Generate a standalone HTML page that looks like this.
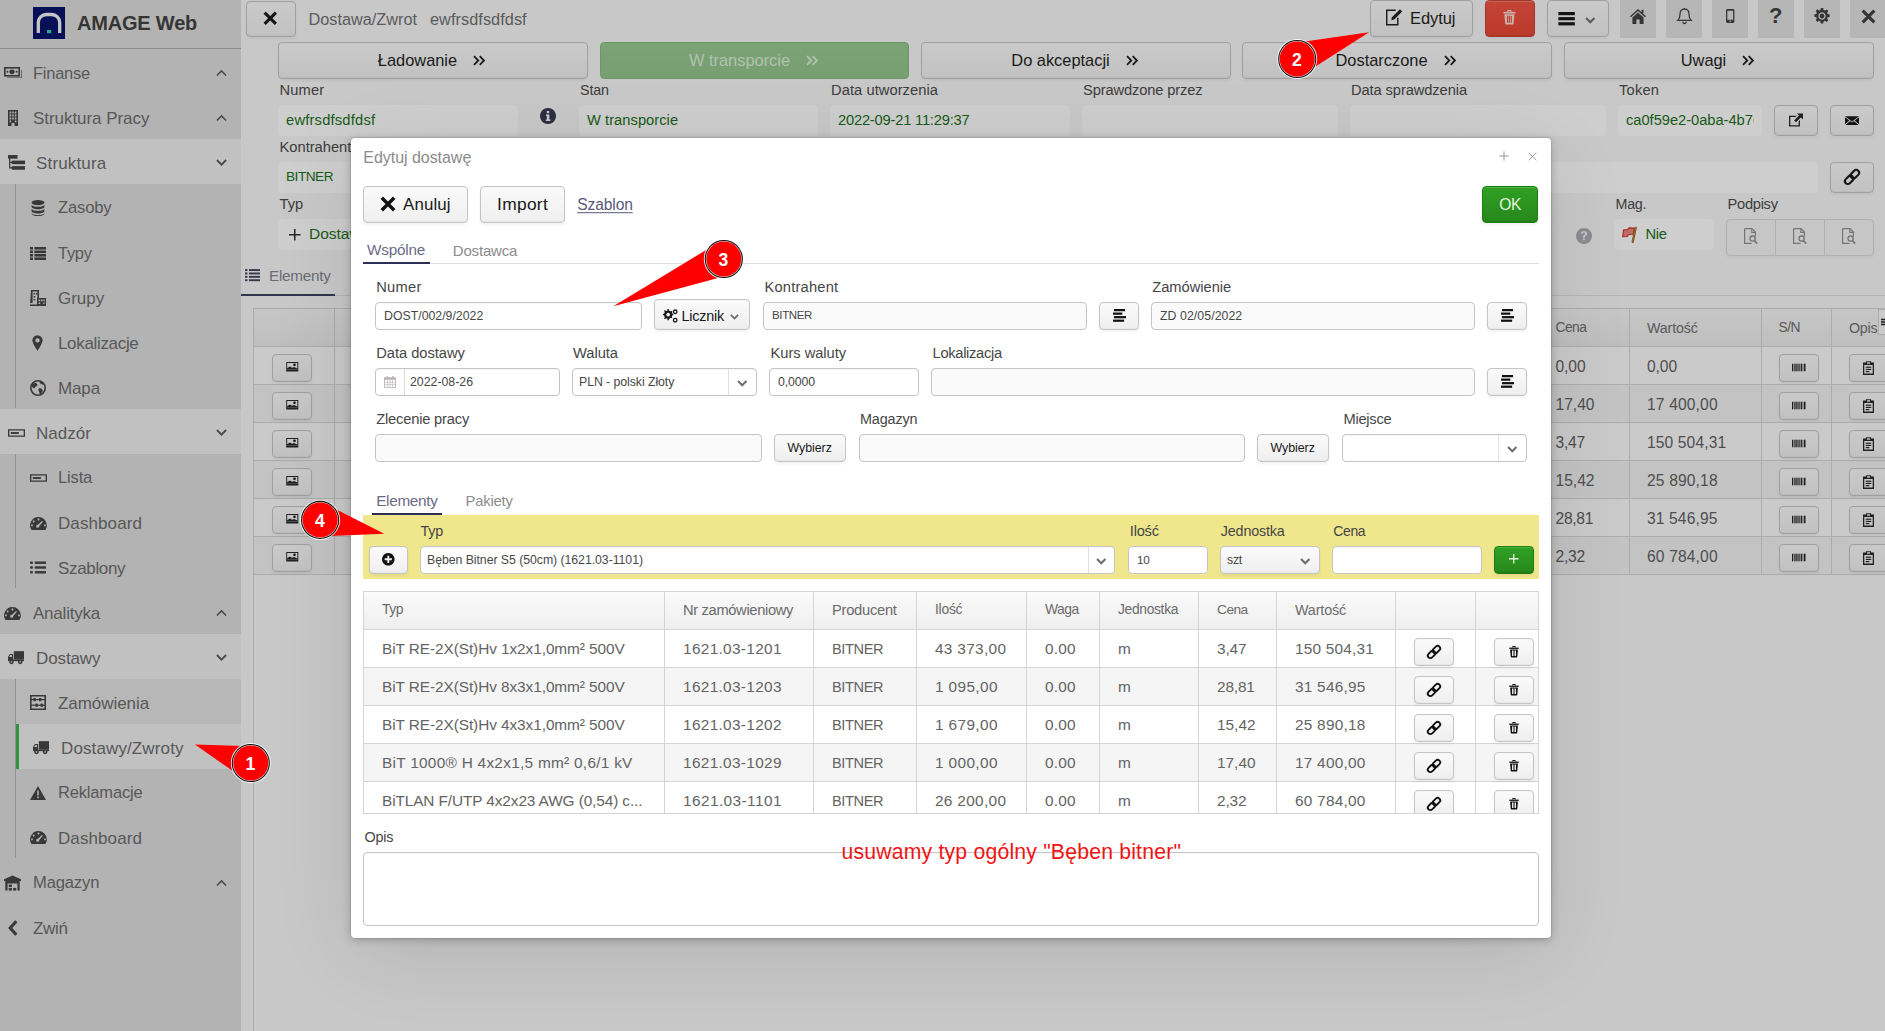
<!DOCTYPE html>
<html lang="pl"><head><meta charset="utf-8"><title>AMAGE Web</title>
<style>
*{box-sizing:border-box;margin:0;padding:0}
html,body{width:1885px;height:1031px;overflow:hidden;background:#fff}
body{font-family:"Liberation Sans",sans-serif;color:#464646;position:relative}
#app{position:absolute;left:0;top:0;width:1885px;height:1031px;background:#fff;overflow:hidden}
#app div,#app span,#app svg,#modal div,#modal span,#modal svg,#modal a,.co{position:absolute}
#curtain{position:absolute;left:0;top:0;width:1885px;height:1031px;background:rgba(34,34,34,.22)}
.t{white-space:nowrap;transform:translateY(-50%);line-height:1}
.ic{display:block;overflow:visible}

.hl{background:#efefef}
.btn{border:1px solid #c5c5c5;border-radius:4px;background:linear-gradient(#fafafa 2%,#efefef 98%);box-shadow:inset 0 1px 0 #f7f7f7,inset 0 -1px 0 #e7e7e7,0 2px 3px rgba(0,0,0,.05)}
.ro{background:#fff;border-radius:4px}
.in{background:#fff;border:1px solid #c5c5c5;border-radius:4px;box-shadow:inset 0 1px 0 #f7f7f7,0 1px 0 rgba(255,255,255,.1)}
.dis{background:#fafafa;border:1px solid #c5c5c5;border-radius:4px}
.lbl{font-size:14.6px;color:#464646}
.grn{color:#1c6e1c}
#modal{position:absolute;left:351px;top:138px;width:1200px;height:800px;background:#fff;border-radius:4px;box-shadow:0 2px 10px rgba(0,0,0,.22),0 16px 80px -6px rgba(0,0,0,.12),0 0 0 1px rgba(0,0,0,.09)}

</style></head><body>
<div id="app">
<div style="left:0px;top:0px;width:241px;height:1031px;background:#dddddd"><div style="left:33px;top:7px;width:32px;height:32px;background:#000c66;"></div><svg class="ic" style="left:33px;top:7px" width="32" height="32" viewBox="0 0 32 32"><path d="M5.300 26V15.500a8 8 0 0 1 8-8h5.400a8 8 0 0 1 8 8V26" fill="none" stroke="#f4f4f4" stroke-width="3.300"/><rect x="14" y="23" width="4.200" height="3.200" fill="#1fd9a0"/></svg><span class="t" style="left:77px;top:23px;font-size:20px;font-weight:bold;color:#3c3c3c;letter-spacing:-0.19px;">AMAGE Web</span><div style="left:0px;top:48px;width:241px;height:1px;background:#a9a9a9"></div><svg class="ic" style="left:4px;top:67px;color:#3f3f3f" width="18" height="12" viewBox="0 0 18 12" fill="#3f3f3f"><rect x="0.8" y="0.8" width="14.4" height="8" fill="none" stroke="currentColor" stroke-width="1.6"/><ellipse cx="8" cy="4.8" rx="2.6" ry="2.4"/><path d="M3 10.4h14.4V3h.6v8H3z"/><path d="M3 4.8a2 2 0 0 0 0-0z"/><circle cx="3.4" cy="4.8" r="1"/><circle cx="12.6" cy="4.8" r="1"/></svg><span class="t" style="left:33px;top:72.5px;font-size:16.44px;color:#686868;letter-spacing:-0.22px;">Finanse</span><svg class="ic" style="left:215.5px;top:68.5px;color:#555" width="11" height="7.5" viewBox="0 0 12 8" fill="none"><path d="M1 7 6 2 11 7" fill="none" stroke="currentColor" stroke-width="1.700"/></svg><svg class="ic" style="left:7px;top:110px;color:#3f3f3f" width="12" height="16" viewBox="0 0 12 16" fill="#3f3f3f"><path d="M1 0h10v16H7.5v-3h-3v3H1z M2.6 1.6v2h1.6v-2z M5.2 1.6v2h1.6v-2z M7.8 1.6v2h1.6v-2z M2.6 4.6v2h1.6v-2z M5.2 4.6v2h1.6v-2z M7.8 4.6v2h1.6v-2z M2.6 7.6v2h1.6v-2z M5.2 7.6v2h1.6v-2z M7.8 7.6v2h1.6v-2z M2.6 10.6v1.6h1.6v-1.6z M7.8 10.6v1.6h1.6v-1.6z" fill-rule="evenodd"/></svg><span class="t" style="left:33px;top:117.5px;font-size:17px;color:#686868;letter-spacing:-0.05px;">Struktura Pracy</span><svg class="ic" style="left:215.5px;top:113.5px;color:#555" width="11" height="7.5" viewBox="0 0 12 8" fill="none"><path d="M1 7 6 2 11 7" fill="none" stroke="currentColor" stroke-width="1.700"/></svg><div class="hl" style="left:0px;top:139px;width:241px;height:45px;"></div><svg class="ic" style="left:8px;top:155px;color:#3f3f3f" width="17" height="15" viewBox="0 0 16 14" fill="#3f3f3f"><rect x="0" y="0" width="9" height="3.4"/><rect x="3.6" y="5.2" width="12.4" height="3.4"/><rect x="3.6" y="10.4" width="12.4" height="3.4"/><path d="M1 3v9.6h3v-1.2H2.2V7.4H4V6.2H2.2V3z"/></svg><span class="t" style="left:36px;top:162.5px;font-size:17px;color:#686868;letter-spacing:0.16px;">Struktura</span><svg class="ic" style="left:215.5px;top:158.5px;color:#555" width="11" height="7.5" viewBox="0 0 12 8" fill="none"><path d="M1 1 6 6 11 1" fill="none" stroke="currentColor" stroke-width="2"/></svg><svg class="ic" style="left:31px;top:200px;color:#3f3f3f" width="14" height="16" viewBox="0 0 14 16" fill="#3f3f3f"><ellipse cx="7" cy="2.6" rx="6.4" ry="2.6"/><path d="M.6 4.4c0 1.4 2.9 2.4 6.4 2.4s6.4-1 6.4-2.4v2.4c0 1.4-2.9 2.5-6.4 2.5S.6 8.2.6 6.8z"/><path d="M.6 8.6c0 1.4 2.9 2.4 6.4 2.4s6.4-1 6.4-2.4V11c0 1.4-2.9 2.5-6.4 2.5S.6 12.400.6 11z"/><path d="M.6 12.800c0 1.400 2.900 2.400 6.400 2.400s6.400-1 6.400-2.400v.6c0 1.400-2.900 2.600-6.400 2.600S.6 14.800.6 13.400z"/></svg><span class="t" style="left:58px;top:207.5px;font-size:16.62px;color:#686868;letter-spacing:-0.16px;">Zasoby</span><svg class="ic" style="left:30px;top:247px;color:#3f3f3f" width="16" height="13" viewBox="0 0 16 13" fill="#3f3f3f"><rect x="0" y="0" width="3" height="2.6"/><rect x="4.400" y="0" width="11.600" height="2.6"/><rect x="0" y="3.500" width="3" height="2.600"/><rect x="4.400" y="3.500" width="11.600" height="2.600"/><rect x="0" y="7" width="3" height="2.600"/><rect x="4.400" y="7" width="11.600" height="2.600"/><rect x="0" y="10.400" width="3" height="2.600"/><rect x="4.400" y="10.400" width="11.600" height="2.600"/></svg><span class="t" style="left:58px;top:252.5px;font-size:16.45px;color:#686868;letter-spacing:-0.25px;">Typy</span><svg class="ic" style="left:30px;top:290px;color:#3f3f3f" width="16" height="16" viewBox="0 0 16 16" fill="#3f3f3f"><path d="M1 0h8v9h-1.600V1.600H2.600V13H0v1.400h7V16H0z M3.600 3h1.600v1.600H3.600z M6 3h1.600v1.600H6z M3.600 6h1.600v1.600H3.600z M3.600 9h1.600v1.600H3.600z" fill-rule="evenodd"/><path d="M7 8h9v8H7z M8.600 9.600v1.600h1.600V9.600z M11 9.600v1.600h1.600V9.600z M13.300 9.600v1.600h1.400V9.600z M8.600 12.400V14h1.600v-1.600z M13.300 12.400V14h1.400v-1.600z" fill-rule="evenodd"/></svg><span class="t" style="left:58px;top:297.5px;font-size:17px;color:#686868;letter-spacing:-0.02px;">Grupy</span><svg class="ic" style="left:32px;top:335px;color:#3f3f3f" width="11" height="16" viewBox="0 0 12 17" fill="#3f3f3f"><path d="M6 0a5.600 5.600 0 0 1 5.600 5.600C11.600 9 6 17 6 17S.4 9 .4 5.600A5.600 5.600 0 0 1 6 0z M6 3.200a2.400 2.400 0 1 0 0 4.800a2.400 2.400 0 0 0 0-4.800z" fill-rule="evenodd"/></svg><span class="t" style="left:58px;top:342.5px;font-size:17px;color:#686868;letter-spacing:-0.33px;">Lokalizacje</span><svg class="ic" style="left:30px;top:380px;color:#3f3f3f" width="16" height="16" viewBox="0 0 16 16" fill="#3f3f3f"><circle cx="8" cy="8" r="7.200" fill="none" stroke="currentColor" stroke-width="1.600"/><path d="M3 3.500c1.500-.5 3-.8 4 .2s.2 2.300-1 2.800-1 2-2.200 1.700S1.500 6 1.500 6z M9 8.500c1.500-.5 3 .3 3.500 1.500s-.5 3-1.700 4-1.300-1.200-1.800-2.500-1-2.500 0-3z M9.500 1.200c1.500 0 3.500 1.500 4 2.800-.8.800-2 .5-2.800-.3s-1.500-1.500-1.200-2.500z"/></svg><span class="t" style="left:58px;top:387.5px;font-size:17px;color:#686868;letter-spacing:-0.14px;">Mapa</span><div class="hl" style="left:0px;top:409px;width:241px;height:45px;"></div><svg class="ic" style="left:8px;top:429px;color:#3f3f3f" width="17" height="8" viewBox="0 0 18 8" fill="#3f3f3f"><path d="M0 0h18v8H0z M1.400 1.400v5.200h15.200V1.400z" fill-rule="evenodd"/><rect x="3" y="3" width="8.500" height="2"/></svg><span class="t" style="left:36px;top:432.5px;font-size:17px;color:#686868;letter-spacing:0.04px;">Nadzór</span><svg class="ic" style="left:215.5px;top:428.5px;color:#555" width="11" height="7.5" viewBox="0 0 12 8" fill="none"><path d="M1 1 6 6 11 1" fill="none" stroke="currentColor" stroke-width="2"/></svg><svg class="ic" style="left:30px;top:474px;color:#3f3f3f" width="17" height="8" viewBox="0 0 18 8" fill="#3f3f3f"><path d="M0 0h18v8H0z M1.400 1.400v5.200h15.200V1.400z" fill-rule="evenodd"/><rect x="3" y="3" width="8.500" height="2"/></svg><span class="t" style="left:58px;top:477.5px;font-size:16.54px;color:#686868;letter-spacing:-0.16px;">Lista</span><svg class="ic" style="left:30px;top:517px;color:#3f3f3f" width="17" height="13" viewBox="0 0 18 14" fill="#3f3f3f"><path d="M9 0a9 9 0 0 1 9 9c0 1.900-.6 3.600-1.500 5H1.500A9 9 0 0 1 9 0z M12.800 4.200 8.400 8.300a1.700 1.700 0 1 0 1.400 1.300l4-4.400z M3.800 3.800a1 1 0 1 0 .01 0z M9 1.700a1 1 0 1 0 .01 0z M2 8a1 1 0 1 0 .01 0z M16 8a1 1 0 1 0 .01 0z" fill-rule="evenodd"/></svg><span class="t" style="left:58px;top:522.5px;font-size:17px;color:#686868;letter-spacing:0.09px;">Dashboard</span><svg class="ic" style="left:30px;top:561px;color:#3f3f3f" width="16" height="13" viewBox="0 0 16 13" fill="#3f3f3f"><rect x="0" y="0.500" width="3" height="2.400" rx="1"/><rect x="4.800" y="0.500" width="11.200" height="2.400"/><rect x="0" y="5.300" width="3" height="2.400" rx="1"/><rect x="4.800" y="5.300" width="11.200" height="2.400"/><rect x="0" y="10.100" width="3" height="2.400" rx="1"/><rect x="4.800" y="10.100" width="11.200" height="2.400"/></svg><span class="t" style="left:58px;top:567.5px;font-size:17px;color:#686868;letter-spacing:-0.33px;">Szablony</span><svg class="ic" style="left:4px;top:607px;color:#3f3f3f" width="17" height="13" viewBox="0 0 18 14" fill="#3f3f3f"><path d="M9 0a9 9 0 0 1 9 9c0 1.900-.6 3.600-1.500 5H1.500A9 9 0 0 1 9 0z M12.800 4.200 8.400 8.300a1.700 1.700 0 1 0 1.400 1.300l4-4.400z M3.800 3.800a1 1 0 1 0 .01 0z M9 1.700a1 1 0 1 0 .01 0z M2 8a1 1 0 1 0 .01 0z M16 8a1 1 0 1 0 .01 0z" fill-rule="evenodd"/></svg><span class="t" style="left:33px;top:612.5px;font-size:17px;color:#686868;letter-spacing:-0.22px;">Analityka</span><svg class="ic" style="left:215.5px;top:608.5px;color:#555" width="11" height="7.5" viewBox="0 0 12 8" fill="none"><path d="M1 7 6 2 11 7" fill="none" stroke="currentColor" stroke-width="1.700"/></svg><div class="hl" style="left:0px;top:634px;width:241px;height:45px;"></div><svg class="ic" style="left:8px;top:651px;color:#3f3f3f" width="16" height="13.5" viewBox="0 0 17 14" fill="#3f3f3f"><path d="M6.200 0H17v9H6.200z"/><path d="M0 9.800V6.200L2 3h3.400v6.800z M1.300 6.200h2.900V4.200H2.500z" fill-rule="evenodd"/><path d="M0 9h17v1.600H0z"/><circle cx="3.700" cy="11.300" r="2.500"/><circle cx="12.900" cy="11.300" r="2.500"/><circle cx="3.700" cy="11.300" r=".9" fill="#d0d0d0"/><circle cx="12.900" cy="11.300" r=".9" fill="#d0d0d0"/></svg><span class="t" style="left:36px;top:657.5px;font-size:17px;color:#686868;letter-spacing:-0.11px;">Dostawy</span><svg class="ic" style="left:215.5px;top:653.5px;color:#555" width="11" height="7.5" viewBox="0 0 12 8" fill="none"><path d="M1 1 6 6 11 1" fill="none" stroke="currentColor" stroke-width="2"/></svg><div style="left:16px;top:679px;width:225px;height:45px;background:#e2e2e2"></div><svg class="ic" style="left:30px;top:695px;color:#3f3f3f" width="16" height="15" viewBox="0 0 16 15" fill="#3f3f3f"><path d="M0 0h16v15H0z M1.600 1.600v11.800h12.800V1.600z" fill-rule="evenodd"/><rect x="1" y="4" width="14" height="1.200"/><rect x="1" y="9.600" width="14" height="1.200"/><rect x="3.400" y="3" width="2.400" height="3.200"/><rect x="9" y="3" width="2.400" height="3.200"/><rect x="5.400" y="8.600" width="2.400" height="3.200"/><rect x="10.600" y="8.600" width="2.400" height="3.200"/></svg><span class="t" style="left:58px;top:702.5px;font-size:17px;color:#686868;letter-spacing:-0.05px;">Zamówienia</span><div class="hl" style="left:16px;top:724px;width:225px;height:45px;"></div><div style="left:16px;top:724px;width:3px;height:45px;background:#36b34a"></div><svg class="ic" style="left:33px;top:741px;color:#3f3f3f" width="16" height="13.5" viewBox="0 0 17 14" fill="#3f3f3f"><path d="M6.200 0H17v9H6.200z"/><path d="M0 9.800V6.200L2 3h3.400v6.800z M1.300 6.200h2.900V4.200H2.500z" fill-rule="evenodd"/><path d="M0 9h17v1.600H0z"/><circle cx="3.700" cy="11.300" r="2.500"/><circle cx="12.900" cy="11.300" r="2.500"/><circle cx="3.700" cy="11.300" r=".9" fill="#d0d0d0"/><circle cx="12.900" cy="11.300" r=".9" fill="#d0d0d0"/></svg><span class="t" style="left:61px;top:747.5px;font-size:17px;color:#686868;letter-spacing:0.12px;">Dostawy/Zwroty</span><svg class="ic" style="left:30px;top:786px;color:#3f3f3f" width="16" height="14" viewBox="0 0 16 14" fill="#3f3f3f"><path d="M8 0 16 14H0z M7.200 4.600v5h1.600v-5z M7.200 10.600v1.600h1.600v-1.600z" fill-rule="evenodd"/></svg><span class="t" style="left:58px;top:792.5px;font-size:16.53px;color:#686868;letter-spacing:-0.18px;">Reklamacje</span><svg class="ic" style="left:30px;top:831px;color:#3f3f3f" width="17" height="13" viewBox="0 0 18 14" fill="#3f3f3f"><path d="M9 0a9 9 0 0 1 9 9c0 1.900-.6 3.600-1.500 5H1.500A9 9 0 0 1 9 0z M12.800 4.200 8.400 8.300a1.700 1.700 0 1 0 1.400 1.300l4-4.400z M3.800 3.800a1 1 0 1 0 .01 0z M9 1.700a1 1 0 1 0 .01 0z M2 8a1 1 0 1 0 .01 0z M16 8a1 1 0 1 0 .01 0z" fill-rule="evenodd"/></svg><span class="t" style="left:58px;top:837.5px;font-size:17px;color:#686868;letter-spacing:0.09px;">Dashboard</span><svg class="ic" style="left:4px;top:875px;color:#3f3f3f" width="17" height="16" viewBox="0 0 18 16" fill="#3f3f3f"><path d="M9 0 18 4v2H0V4z"/><path d="M1.400 6h15.200v10h-2.400V8.400H3.800V16H1.400z"/><rect x="5" y="9.600" width="3.400" height="2.600"/><rect x="5" y="13.200" width="3.400" height="2.800"/><rect x="9.600" y="13.200" width="3.400" height="2.800"/></svg><span class="t" style="left:33px;top:882.5px;font-size:16.61px;color:#686868;letter-spacing:-0.17px;">Magazyn</span><svg class="ic" style="left:215.5px;top:878.5px;color:#555" width="11" height="7.5" viewBox="0 0 12 8" fill="none"><path d="M1 7 6 2 11 7" fill="none" stroke="currentColor" stroke-width="1.700"/></svg><svg class="ic" style="left:8px;top:920px;color:#3f3f3f" width="10" height="16" viewBox="0 0 10 16" fill="#3f3f3f"><path d="M8.300 1.300 2.200 8l6.100 6.700" fill="none" stroke="currentColor" stroke-width="3.100"/></svg><span class="t" style="left:33px;top:927.5px;font-size:17px;color:#686868;letter-spacing:-0.30px;">Zwiń</span><div style="left:15px;top:184px;width:1px;height:224px;background:#b0b0b0"></div><div style="left:15px;top:454px;width:1px;height:134px;background:#b0b0b0"></div><div style="left:15px;top:679px;width:1px;height:179px;background:#b0b0b0"></div></div><div style="left:241px;top:0px;width:1644px;height:1031px;background:#f8f8f8"></div><div class="btn" style="left:246px;top:1px;width:50px;height:36px;"></div><svg class="ic" style="left:263px;top:10.5px;color:#111;" width="14.5" height="14.5" viewBox="0 0 16 16" fill="#111"><path d="M1.800 1.800 14.200 14.200M14.200 1.800 1.800 14.200" stroke="currentColor" stroke-width="3.400" fill="none" stroke-linecap="butt"/></svg><span class="t" style="left:308.5px;top:19px;font-size:16.3px;color:#6c6c6c;letter-spacing:-0.01px;">Dostawa/Zwrot</span><span class="t" style="left:430px;top:19px;font-size:16.3px;color:#6c6c6c;letter-spacing:0.06px;">ewfrsdfsdfdsf</span><div class="btn" style="left:1370px;top:0px;width:103px;height:37px;"></div><svg class="ic" style="left:1386px;top:8.5px;color:#1c1c1c;" width="16.4" height="16.4" viewBox="0 0 16 16" fill="#1c1c1c"><path d="M9.500 1.200H.700V15.300H11.500V8.500" fill="none" stroke="currentColor" stroke-width="1.400"/><path d="M13.600 .300 15.800 2.500 8 10.300 5.200 10.900 5.800 8.100z"/></svg><span class="t" style="left:1410px;top:17.8px;font-size:16.5px;color:#191919;letter-spacing:-0.07px;">Edytuj</span><div class="btn" style="left:1485px;top:0px;width:50px;height:37px;background:linear-gradient(#f0503f 2%,#e8412f 98%);border-color:#c9402f;box-shadow:inset 0 1px 0 #f47a6c,inset 0 -1px 0 #dc3a2a,0 2px 3px rgba(0,0,0,.05)"></div><svg class="ic" style="left:1503px;top:8.5px;color:#fbdcd6;" width="12.8" height="16.4" viewBox="0 0 14 16" fill="#fbdcd6"><path d="M4.600 2.200V.900a.9.900 0 0 1 .9-.9h3a.9.900 0 0 1 .9.900V2.200h-1.200V1.200H5.800V2.200z"/><path d="M.400 2.200h13.200V4H.400z"/><path d="M1.500 4.800h11l-.9 10.200a1 1 0 0 1-1 1H3.400a1 1 0 0 1-1-1z M4.300 6.400v7.600h1.300V6.400z M6.350 6.400v7.600h1.300V6.400z M8.400 6.400v7.600h1.300V6.400z" fill-rule="evenodd"/></svg><div class="btn" style="left:1547px;top:0px;width:62px;height:37px;"></div><svg class="ic" style="left:1558px;top:11.8px;color:#111;" width="17.2" height="13.4" viewBox="0 0 16 13" fill="#111"><rect width="16" height="3.100" y="0"/><rect width="16" height="3.100" y="4.950"/><rect width="16" height="3.100" y="9.900"/></svg><svg class="ic" style="left:1585px;top:17px;color:#6e6e6e" width="10.5" height="7" viewBox="0 0 12 8" fill="none"><path d="M1.200 1.200 6 6 10.800 1.200" fill="none" stroke="currentColor" stroke-width="2.500"/></svg><div style="left:1620px;top:0px;width:36px;height:38px;background:#e1e1e1"></div><div style="left:1666px;top:0px;width:36px;height:38px;background:#e1e1e1"></div><div style="left:1712px;top:0px;width:36px;height:38px;background:#e1e1e1"></div><div style="left:1758px;top:0px;width:36px;height:38px;background:#e1e1e1"></div><div style="left:1804px;top:0px;width:36px;height:38px;background:#e1e1e1"></div><div style="left:1850px;top:0px;width:36px;height:38px;background:#e1e1e1"></div><svg class="ic" style="left:1630px;top:8.5px;color:#3c3c3c;" width="16" height="15" viewBox="0 0 16 15" fill="#3c3c3c"><path d="M8 0 16 7.200 15 8.300 8 2.100 1 8.300 0 7.200z"/><path d="M8 3.400 13.600 8.400V15H9.600V10.500H6.400V15H2.400V8.400z"/><rect x="11.500" y=".8" width="2" height="3.500"/></svg><svg class="ic" style="left:1677px;top:8px;color:#3c3c3c" width="15" height="17" viewBox="0 0 15 17" fill="#3c3c3c"><path d="M7.500 1.200c3 0 4.500 2.300 4.500 5 0 3.800 1.300 5.300 2.200 6.200H.8C1.700 11.500 3 10 3 6.200c0-2.700 1.500-5 4.500-5z" fill="none" stroke="currentColor" stroke-width="1.300"/><path d="M5.800 13.800a1.700 1.700 0 0 0 3.400 0" fill="none" stroke="currentColor" stroke-width="1.300"/><rect x="6.900" y="0" width="1.200" height="1.500"/></svg><svg class="ic" style="left:1726px;top:9px;color:#3c3c3c;" width="8.4" height="14" viewBox="0 0 9 15" fill="#3c3c3c"><path d="M1.500 0h6A1.500 1.500 0 0 1 9 1.500v12A1.500 1.500 0 0 1 7.500 15h-6A1.500 1.500 0 0 1 0 13.500v-12A1.500 1.500 0 0 1 1.500 0z M1.400 2v9.500h6.200V2z M4.500 12.300a.8.800 0 1 0 .01 0z" fill-rule="evenodd"/></svg><span class="t" style="left:1769px;top:16.2px;font-size:22px;font-weight:bold;color:#3c3c3c;">?</span><svg class="ic" style="left:1814px;top:8px;color:#3c3c3c;" width="16" height="16" viewBox="0 0 16 16" fill="#3c3c3c"><path d="M6.800 0h2.400l.4 2 1.300.55 1.700-1.150 1.700 1.700-1.150 1.700.55 1.300 2 .4v2.400l-2 .4-.55 1.300 1.150 1.700-1.700 1.700-1.700-1.150-1.300.55-.4 2H6.800l-.4-2-1.300-.55-1.700 1.150-1.700-1.700 1.150-1.700L2.300 9.200l-2-.4V6.400l2-.4.55-1.300L1.700 3l1.700-1.700 1.700 1.150L6.400 2z M8 4.300a3.700 3.700 0 1 0 .01 0z M8 5.600a2.400 2.400 0 1 1-.01 0z" fill-rule="evenodd"/></svg><svg class="ic" style="left:1860.5px;top:8.5px;color:#3c3c3c;" width="15" height="15" viewBox="0 0 16 16" fill="#3c3c3c"><path d="M1.800 1.800 14.200 14.200M14.200 1.800 1.800 14.200" stroke="currentColor" stroke-width="3.400" fill="none" stroke-linecap="butt"/></svg><div class="btn" style="left:278px;top:42px;width:309.5px;height:37px;"></div><div style="left:278px;top:42px;width:310px;height:37px;display:flex;align-items:center;justify-content:center;padding-right:3px"><span style="position:static;font-size:16.4px;color:#191919">Ładowanie</span><svg style="position:static;margin-left:16px;color:#191919" width="12" height="11" viewBox="0 0 14 12"><path d="M1.200 1 6.200 6 1.200 11M7.800 1 12.800 6 7.800 11" stroke="currentColor" stroke-width="2.100" fill="none"/></svg></div><div class="btn" style="left:600px;top:42px;width:309px;height:37px;background:linear-gradient(#96c88e,#90c388);border-color:#86b87e;box-shadow:none"></div><div style="left:600px;top:42px;width:310px;height:37px;display:flex;align-items:center;justify-content:center;padding-right:3px"><span style="position:static;font-size:16.4px;color:#dbeed8">W transporcie</span><svg style="position:static;margin-left:16px;color:#dbeed8" width="12" height="11" viewBox="0 0 14 12"><path d="M1.200 1 6.200 6 1.200 11M7.800 1 12.800 6 7.800 11" stroke="currentColor" stroke-width="2.100" fill="none"/></svg></div><div class="btn" style="left:921px;top:42px;width:309.5px;height:37px;"></div><div style="left:921px;top:42px;width:310px;height:37px;display:flex;align-items:center;justify-content:center;padding-right:3px"><span style="position:static;font-size:16.4px;color:#191919">Do akceptacji</span><svg style="position:static;margin-left:16px;color:#191919" width="12" height="11" viewBox="0 0 14 12"><path d="M1.200 1 6.200 6 1.200 11M7.800 1 12.800 6 7.800 11" stroke="currentColor" stroke-width="2.100" fill="none"/></svg></div><div class="btn" style="left:1242px;top:42px;width:309.5px;height:37px;"></div><div style="left:1242px;top:42px;width:310px;height:37px;display:flex;align-items:center;justify-content:center;padding-right:3px"><span style="position:static;font-size:16.4px;color:#191919">Dostarczone</span><svg style="position:static;margin-left:16px;color:#191919" width="12" height="11" viewBox="0 0 14 12"><path d="M1.200 1 6.200 6 1.200 11M7.800 1 12.800 6 7.800 11" stroke="currentColor" stroke-width="2.100" fill="none"/></svg></div><div class="btn" style="left:1564px;top:42px;width:309.5px;height:37px;"></div><div style="left:1564px;top:42px;width:310px;height:37px;display:flex;align-items:center;justify-content:center;padding-right:3px"><span style="position:static;font-size:16.4px;color:#191919">Uwagi</span><svg style="position:static;margin-left:16px;color:#191919" width="12" height="11" viewBox="0 0 14 12"><path d="M1.200 1 6.200 6 1.200 11M7.800 1 12.800 6 7.800 11" stroke="currentColor" stroke-width="2.100" fill="none"/></svg></div><span class="t" style="left:279.5px;top:90px;font-size:14.7px;color:#464646;letter-spacing:0.13px;">Numer</span><span class="t" style="left:580px;top:90px;font-size:14.34px;color:#464646;letter-spacing:-0.16px;">Stan</span><span class="t" style="left:831px;top:90px;font-size:14.7px;color:#464646;letter-spacing:0.06px;">Data utworzenia</span><span class="t" style="left:1083px;top:90px;font-size:14.7px;color:#464646;letter-spacing:-0.14px;">Sprawdzone przez</span><span class="t" style="left:1351px;top:90px;font-size:14.7px;color:#464646;letter-spacing:-0.10px;">Data sprawdzenia</span><span class="t" style="left:1619px;top:90px;font-size:14.7px;color:#464646;letter-spacing:0.20px;">Token</span><div class="ro" style="left:278px;top:105px;width:240px;height:31px;"><div style="left:0px;top:0px;width:232px;height:31px;overflow:hidden"><span class="t" style="left:8px;top:15px;font-size:14.7px;color:#146c14;letter-spacing:0.21px;">ewfrsdfsdfdsf</span></div></div><div class="ro" style="left:579px;top:105px;width:239px;height:31px;"><div style="left:0px;top:0px;width:231px;height:31px;overflow:hidden"><span class="t" style="left:8px;top:15px;font-size:14.7px;color:#146c14;letter-spacing:0.04px;">W transporcie</span></div></div><div class="ro" style="left:830px;top:105px;width:240px;height:31px;"><div style="left:0px;top:0px;width:232px;height:31px;overflow:hidden"><span class="t" style="left:8px;top:15px;font-size:14.7px;color:#146c14;letter-spacing:-0.20px;">2022-09-21 11:29:37</span></div></div><div class="ro" style="left:1082px;top:105px;width:256px;height:31px;"></div><div class="ro" style="left:1350px;top:105px;width:256px;height:31px;"></div><div class="ro" style="left:1618px;top:105px;width:144px;height:31px;"><div style="left:0px;top:0px;width:136px;height:31px;overflow:hidden"><span class="t" style="left:8px;top:15px;font-size:14.7px;color:#146c14;letter-spacing:-0.03px;">ca0f59e2-0aba-4b76</span></div></div><svg class="ic" style="left:540px;top:108px;color:#33334f;" width="16" height="16" viewBox="0 0 16 16" fill="#33334f"><path d="M8 0a8 8 0 1 0 .01 0z M6.800 3h2.400v2.200H6.800z M6 6.500h3.400v5h1V13H5.800v-1.500h1V8H6z" fill-rule="evenodd"/></svg><div class="btn" style="left:1774px;top:105px;width:44px;height:31px;"></div><svg class="ic" style="left:1789px;top:113px;color:#222;" width="14" height="14" viewBox="0 0 16 15" fill="#222"><path d="M0 2.500h9L7.500 4H1.500v9.500H11V9l1.500-1.500V15H0z"/><path d="M9 0h7v7l-2.400-2.400L8 10.200 5.800 8l5.600-5.600z"/></svg><div class="btn" style="left:1830px;top:105px;width:44px;height:31px;"></div><svg class="ic" style="left:1845px;top:116px;color:#111;" width="14" height="9" viewBox="0 0 16 10" fill="#111"><path d="M0 0h16L8 6z"/><path d="M0 1.300 5 5 0 9.400z M16 1.300 11 5 16 9.400z M.6 10 5.900 5.700 8 7.300l2.100-1.600L15.400 10z"/></svg><span class="t" style="left:279.5px;top:147px;font-size:14.7px;color:#464646;">Kontrahent</span><div class="ro" style="left:278px;top:162px;width:1540px;height:31px;"><span class="t" style="left:8px;top:15px;font-size:13.63px;color:#146c14;letter-spacing:-0.49px;">BITNER</span></div><div class="btn" style="left:1830px;top:162px;width:44px;height:31px;"></div><svg class="ic" style="left:1844px;top:169px;color:#111;" width="16" height="16" viewBox="0 0 16 16" fill="#111"><g transform="rotate(-45 8 8)" fill="none" stroke="currentColor" stroke-width="2.100"><rect x="-0.800" y="5.100" width="9.600" height="5.800" rx="2.900"/><rect x="7.200" y="5.100" width="9.600" height="5.800" rx="2.900"/></g></svg><span class="t" style="left:279.5px;top:204px;font-size:14.7px;color:#464646;">Typ</span><div class="ro" style="left:278px;top:219px;width:1250px;height:31px;"></div><svg class="ic" style="left:288.8px;top:229px;color:#2a2a2a;" width="11.5" height="11.5" viewBox="0 0 12 12" fill="#2a2a2a"><path d="M5.200 0h1.600v5.200H12v1.600H6.800V12H5.200V6.800H0V5.200h5.200z"/></svg><span class="t" style="left:309px;top:234px;font-size:14.7px;color:#146c14;font-size:15.5px;">Dostawa</span><svg class="ic" style="left:1575.5px;top:228px;color:#a9a9b4;" width="16" height="16" viewBox="0 0 16 16" fill="#a9a9b4"><path d="M8 0a8 8 0 1 0 .01 0z M5 5.800C5 4 6.300 3 8 3s3 1 3 2.600c0 1.300-.8 1.900-1.500 2.400-.5.400-.7.700-.7 1.500H7c0-1.300.5-1.900 1.100-2.400.6-.4 1-.8 1-1.400 0-.7-.5-1.100-1.200-1.100s-1.200.5-1.200 1.200z M7 10.500h1.800v1.800H7z" fill-rule="evenodd"/></svg><span class="t" style="left:1615.5px;top:204px;font-size:14.25px;color:#464646;letter-spacing:-0.22px;">Mag.</span><span class="t" style="left:1727.5px;top:204px;font-size:14.7px;color:#464646;letter-spacing:-0.29px;">Podpisy</span><div class="ro" style="left:1614px;top:219px;width:100px;height:31px;"></div><svg class="ic" style="left:1621.5px;top:226.5px;color:#464646;" width="16" height="16" viewBox="0 0 16 16" fill="#464646"><path d="M1.600 2.800 5.600 2.600 7 .900 12.300 1.100 11.300 7.300 6.600 7.500 5.300 9.500 .600 9.700z" fill="#e8827a" stroke="#d22a1a" stroke-width="1.100" stroke-linejoin="round"/><path d="M13.700 .800 10.700 14.800" fill="none" stroke="#8a5a18" stroke-width="2.300" stroke-linecap="round"/><path d="M13.700 .800 10.700 14.800" fill="none" stroke="#c08a3a" stroke-width="1" stroke-linecap="round"/></svg><span class="t" style="left:1645.5px;top:234px;font-size:13.98px;color:#146c14;font-size:14.74px;letter-spacing:-0.36px;">Nie</span><div class="btn" style="left:1726px;top:219px;width:148px;height:37px;background:#f5f5f5;border-color:#d9d9d9;box-shadow:0 2px 3px rgba(0,0,0,.04)"></div><div style="left:1775px;top:220px;width:1px;height:35px;background:#d9d9d9"></div><div style="left:1824px;top:220px;width:1px;height:35px;background:#d9d9d9"></div><svg class="ic" style="left:1744px;top:228px;color:#8d8d8d" width="14" height="16" viewBox="0 0 14 16" fill="none"><path d="M.6.600H8l3.400 3.400v4.500M.6.600v14.800h7" fill="none" stroke="currentColor" stroke-width="1.200"/><path d="M7.800.800v3.600h3.600" fill="none" stroke="currentColor" stroke-width="1.100"/><circle cx="8.600" cy="10.600" r="2.600" fill="none" stroke="currentColor" stroke-width="1.300"/><path d="M10.400 12.600 13.200 15.600" stroke="currentColor" stroke-width="1.700"/></svg><svg class="ic" style="left:1793px;top:228px;color:#8d8d8d" width="14" height="16" viewBox="0 0 14 16" fill="none"><path d="M.6.600H8l3.400 3.400v4.500M.6.600v14.800h7" fill="none" stroke="currentColor" stroke-width="1.200"/><path d="M7.800.800v3.600h3.600" fill="none" stroke="currentColor" stroke-width="1.100"/><circle cx="8.600" cy="10.600" r="2.600" fill="none" stroke="currentColor" stroke-width="1.300"/><path d="M10.400 12.600 13.200 15.600" stroke="currentColor" stroke-width="1.700"/></svg><svg class="ic" style="left:1842px;top:228px;color:#8d8d8d" width="14" height="16" viewBox="0 0 14 16" fill="none"><path d="M.6.600H8l3.400 3.400v4.500M.6.600v14.800h7" fill="none" stroke="currentColor" stroke-width="1.200"/><path d="M7.800.800v3.600h3.600" fill="none" stroke="currentColor" stroke-width="1.100"/><circle cx="8.600" cy="10.600" r="2.600" fill="none" stroke="currentColor" stroke-width="1.300"/><path d="M10.400 12.600 13.200 15.600" stroke="currentColor" stroke-width="1.700"/></svg><div style="left:241px;top:295px;width:1644px;height:1px;background:#dedede"></div><svg class="ic" style="left:245px;top:268.5px;color:#3a3a58;" width="15" height="12.5" viewBox="0 0 16 13" fill="#3a3a58"><rect x="0" y="0" width="2.600" height="2"/><rect x="4.200" y="0" width="11.800" height="2"/><rect x="0" y="3.600" width="2.600" height="2"/><rect x="4.200" y="3.600" width="11.800" height="2"/><rect x="0" y="7.200" width="2.600" height="2"/><rect x="4.200" y="7.200" width="11.800" height="2"/><rect x="0" y="10.800" width="2.600" height="2"/><rect x="4.200" y="10.800" width="11.800" height="2"/></svg><span class="t" style="left:269px;top:276px;font-size:15.3px;color:#82828c;letter-spacing:-0.25px;">Elementy</span><div style="left:241px;top:294px;width:94px;height:2px;background:#3a3a5e"></div><div style="left:253px;top:308px;width:1640px;height:723px;border-left:1px solid #d4d4d4;border-top:1px solid #d4d4d4;background:#f8f8f8;overflow:hidden"><div style="left:0px;top:0px;width:1640px;height:38px;background:linear-gradient(#f6f6f6,#ebebeb);border-bottom:1px solid #d4d4d4"></div><div style="left:0px;top:38px;width:1640px;height:38px;background:#fafafa;border-bottom:1px solid #d4d4d4"></div><div style="left:0px;top:76px;width:1640px;height:38px;background:#f1f1f1;border-bottom:1px solid #d4d4d4"></div><div style="left:0px;top:114px;width:1640px;height:38px;background:#fafafa;border-bottom:1px solid #d4d4d4"></div><div style="left:0px;top:152px;width:1640px;height:38px;background:#f1f1f1;border-bottom:1px solid #d4d4d4"></div><div style="left:0px;top:190px;width:1640px;height:38px;background:#fafafa;border-bottom:1px solid #d4d4d4"></div><div style="left:0px;top:228px;width:1640px;height:38px;background:#f1f1f1;border-bottom:1px solid #d4d4d4"></div><div style="left:80px;top:0px;width:1px;height:266px;background:#d4d4d4"></div><div style="left:1374.5px;top:0px;width:1px;height:266px;background:#d4d4d4"></div><div style="left:1506.5px;top:0px;width:1px;height:266px;background:#d4d4d4"></div><div style="left:1576.5px;top:0px;width:1px;height:266px;background:#d4d4d4"></div><span class="t" style="left:1301.5px;top:18.5px;font-size:13.74px;color:#6b6b6b;letter-spacing:-0.48px;">Cena</span><span class="t" style="left:1393px;top:18.5px;font-size:14.29px;color:#6b6b6b;letter-spacing:-0.16px;">Wartość</span><span class="t" style="left:1524.5px;top:18.5px;font-size:13.79px;color:#6b6b6b;letter-spacing:-0.48px;">S/N</span><span class="t" style="left:1595px;top:18.5px;font-size:14.20px;color:#6b6b6b;letter-spacing:-0.22px;">Opis</span><span class="t" style="left:1301.5px;top:57.5px;font-size:15.6px;color:#5c5c5c;letter-spacing:-0.09px;">0,00</span><span class="t" style="left:1393px;top:57.5px;font-size:15.6px;color:#5c5c5c;letter-spacing:-0.09px;">0,00</span><div class="btn" style="left:18px;top:45px;width:40px;height:28px;"></div><svg class="ic" style="left:31.69999999999999px;top:52.9px;color:#222;" width="12.5" height="9.5" viewBox="0 0 14 11" fill="#222"><path d="M0 0h14v11H0z M1.100 1.100v7.600h11.800V1.100z" fill-rule="evenodd"/><path d="M1 8.800V7.200l3.200-1.900 2.600 1.500 2.200-1 3.900 1.600V8.800z"/><circle cx="9.600" cy="3.300" r="1.600"/></svg><div class="btn" style="left:1525px;top:45px;width:40px;height:28px;"></div><svg class="ic" style="left:1538px;top:53.5px;color:#222;" width="13.5" height="9" viewBox="0 0 16 9" fill="#222"><rect x="0" width="1.600" height="9"/><rect x="2.400" width=".8" height="9"/><rect x="4" width="1.600" height="9"/><rect x="6.400" width="1.400" height="9"/><rect x="8.600" width=".8" height="9"/><rect x="10.200" width="1.600" height="9"/><rect x="12.600" width=".8" height="9"/><rect x="14.200" width="1.800" height="9"/></svg><div class="btn" style="left:1595px;top:45px;width:40px;height:28px;"></div><svg class="ic" style="left:1609px;top:51.5px;color:#222;" width="11" height="14" viewBox="0 0 12 15" fill="#222"><path d="M0 1.500h3.200V0h5.600v1.500H12V15H0z M1.400 4.200v9.400h9.200V4.200z M4.400 1.200v1.600h3.200V1.200z" fill-rule="evenodd"/><rect x="3" y="6" width="6" height="1.300"/><rect x="3" y="8.400" width="6" height="1.300"/><rect x="3" y="10.800" width="4" height="1.300"/></svg><span class="t" style="left:1301.5px;top:95.5px;font-size:15.6px;color:#5c5c5c;letter-spacing:-0.01px;">17,40</span><span class="t" style="left:1393px;top:95.5px;font-size:15.6px;color:#5c5c5c;letter-spacing:0.15px;">17 400,00</span><div class="btn" style="left:18px;top:83px;width:40px;height:28px;"></div><svg class="ic" style="left:31.69999999999999px;top:90.9px;color:#222;" width="12.5" height="9.5" viewBox="0 0 14 11" fill="#222"><path d="M0 0h14v11H0z M1.100 1.100v7.600h11.800V1.100z" fill-rule="evenodd"/><path d="M1 8.800V7.200l3.200-1.900 2.600 1.500 2.200-1 3.900 1.600V8.800z"/><circle cx="9.600" cy="3.300" r="1.600"/></svg><div class="btn" style="left:1525px;top:83px;width:40px;height:28px;"></div><svg class="ic" style="left:1538px;top:91.5px;color:#222;" width="13.5" height="9" viewBox="0 0 16 9" fill="#222"><rect x="0" width="1.600" height="9"/><rect x="2.400" width=".8" height="9"/><rect x="4" width="1.600" height="9"/><rect x="6.400" width="1.400" height="9"/><rect x="8.600" width=".8" height="9"/><rect x="10.200" width="1.600" height="9"/><rect x="12.600" width=".8" height="9"/><rect x="14.200" width="1.800" height="9"/></svg><div class="btn" style="left:1595px;top:83px;width:40px;height:28px;"></div><svg class="ic" style="left:1609px;top:89.5px;color:#222;" width="11" height="14" viewBox="0 0 12 15" fill="#222"><path d="M0 1.500h3.200V0h5.600v1.500H12V15H0z M1.400 4.200v9.400h9.200V4.200z M4.400 1.200v1.600h3.200V1.200z" fill-rule="evenodd"/><rect x="3" y="6" width="6" height="1.300"/><rect x="3" y="8.400" width="6" height="1.300"/><rect x="3" y="10.800" width="4" height="1.300"/></svg><span class="t" style="left:1301.5px;top:133.5px;font-size:15.6px;color:#5c5c5c;letter-spacing:-0.25px;">3,47</span><span class="t" style="left:1393px;top:133.5px;font-size:15.6px;color:#5c5c5c;letter-spacing:0.12px;">150 504,31</span><div class="btn" style="left:18px;top:121px;width:40px;height:28px;"></div><svg class="ic" style="left:31.69999999999999px;top:128.9px;color:#222;" width="12.5" height="9.5" viewBox="0 0 14 11" fill="#222"><path d="M0 0h14v11H0z M1.100 1.100v7.600h11.800V1.100z" fill-rule="evenodd"/><path d="M1 8.800V7.200l3.200-1.900 2.600 1.500 2.200-1 3.900 1.600V8.800z"/><circle cx="9.600" cy="3.300" r="1.600"/></svg><div class="btn" style="left:1525px;top:121px;width:40px;height:28px;"></div><svg class="ic" style="left:1538px;top:129.5px;color:#222;" width="13.5" height="9" viewBox="0 0 16 9" fill="#222"><rect x="0" width="1.600" height="9"/><rect x="2.400" width=".8" height="9"/><rect x="4" width="1.600" height="9"/><rect x="6.400" width="1.400" height="9"/><rect x="8.600" width=".8" height="9"/><rect x="10.200" width="1.600" height="9"/><rect x="12.600" width=".8" height="9"/><rect x="14.200" width="1.800" height="9"/></svg><div class="btn" style="left:1595px;top:121px;width:40px;height:28px;"></div><svg class="ic" style="left:1609px;top:127.5px;color:#222;" width="11" height="14" viewBox="0 0 12 15" fill="#222"><path d="M0 1.500h3.200V0h5.600v1.500H12V15H0z M1.400 4.200v9.400h9.200V4.200z M4.400 1.200v1.600h3.200V1.200z" fill-rule="evenodd"/><rect x="3" y="6" width="6" height="1.300"/><rect x="3" y="8.400" width="6" height="1.300"/><rect x="3" y="10.800" width="4" height="1.300"/></svg><span class="t" style="left:1301.5px;top:171.5px;font-size:15.6px;color:#5c5c5c;letter-spacing:-0.01px;">15,42</span><span class="t" style="left:1393px;top:171.5px;font-size:15.6px;color:#5c5c5c;letter-spacing:0.15px;">25 890,18</span><div class="btn" style="left:18px;top:159px;width:40px;height:28px;"></div><svg class="ic" style="left:31.69999999999999px;top:166.9px;color:#222;" width="12.5" height="9.5" viewBox="0 0 14 11" fill="#222"><path d="M0 0h14v11H0z M1.100 1.100v7.600h11.800V1.100z" fill-rule="evenodd"/><path d="M1 8.800V7.200l3.200-1.900 2.600 1.500 2.200-1 3.900 1.600V8.800z"/><circle cx="9.600" cy="3.300" r="1.600"/></svg><div class="btn" style="left:1525px;top:159px;width:40px;height:28px;"></div><svg class="ic" style="left:1538px;top:167.5px;color:#222;" width="13.5" height="9" viewBox="0 0 16 9" fill="#222"><rect x="0" width="1.600" height="9"/><rect x="2.400" width=".8" height="9"/><rect x="4" width="1.600" height="9"/><rect x="6.400" width="1.400" height="9"/><rect x="8.600" width=".8" height="9"/><rect x="10.200" width="1.600" height="9"/><rect x="12.600" width=".8" height="9"/><rect x="14.200" width="1.800" height="9"/></svg><div class="btn" style="left:1595px;top:159px;width:40px;height:28px;"></div><svg class="ic" style="left:1609px;top:165.5px;color:#222;" width="11" height="14" viewBox="0 0 12 15" fill="#222"><path d="M0 1.500h3.200V0h5.600v1.500H12V15H0z M1.400 4.200v9.400h9.200V4.200z M4.400 1.200v1.600h3.200V1.200z" fill-rule="evenodd"/><rect x="3" y="6" width="6" height="1.300"/><rect x="3" y="8.400" width="6" height="1.300"/><rect x="3" y="10.800" width="4" height="1.300"/></svg><span class="t" style="left:1301.5px;top:209.5px;font-size:15.6px;color:#5c5c5c;letter-spacing:-0.28px;">28,81</span><span class="t" style="left:1393px;top:209.5px;font-size:15.6px;color:#5c5c5c;letter-spacing:0.13px;">31 546,95</span><div class="btn" style="left:18px;top:197px;width:40px;height:28px;"></div><svg class="ic" style="left:31.69999999999999px;top:204.9px;color:#222;" width="12.5" height="9.5" viewBox="0 0 14 11" fill="#222"><path d="M0 0h14v11H0z M1.100 1.100v7.600h11.800V1.100z" fill-rule="evenodd"/><path d="M1 8.800V7.200l3.200-1.900 2.600 1.500 2.200-1 3.900 1.600V8.800z"/><circle cx="9.600" cy="3.300" r="1.600"/></svg><div class="btn" style="left:1525px;top:197px;width:40px;height:28px;"></div><svg class="ic" style="left:1538px;top:205.5px;color:#222;" width="13.5" height="9" viewBox="0 0 16 9" fill="#222"><rect x="0" width="1.600" height="9"/><rect x="2.400" width=".8" height="9"/><rect x="4" width="1.600" height="9"/><rect x="6.400" width="1.400" height="9"/><rect x="8.600" width=".8" height="9"/><rect x="10.200" width="1.600" height="9"/><rect x="12.600" width=".8" height="9"/><rect x="14.200" width="1.800" height="9"/></svg><div class="btn" style="left:1595px;top:197px;width:40px;height:28px;"></div><svg class="ic" style="left:1609px;top:203.5px;color:#222;" width="11" height="14" viewBox="0 0 12 15" fill="#222"><path d="M0 1.500h3.200V0h5.600v1.500H12V15H0z M1.400 4.200v9.400h9.200V4.200z M4.400 1.200v1.600h3.200V1.200z" fill-rule="evenodd"/><rect x="3" y="6" width="6" height="1.300"/><rect x="3" y="8.400" width="6" height="1.300"/><rect x="3" y="10.800" width="4" height="1.300"/></svg><span class="t" style="left:1301.5px;top:247.5px;font-size:15.6px;color:#5c5c5c;letter-spacing:-0.25px;">2,32</span><span class="t" style="left:1393px;top:247.5px;font-size:15.6px;color:#5c5c5c;letter-spacing:0.15px;">60 784,00</span><div class="btn" style="left:18px;top:235px;width:40px;height:28px;"></div><svg class="ic" style="left:31.69999999999999px;top:242.9px;color:#222;" width="12.5" height="9.5" viewBox="0 0 14 11" fill="#222"><path d="M0 0h14v11H0z M1.100 1.100v7.600h11.800V1.100z" fill-rule="evenodd"/><path d="M1 8.800V7.200l3.200-1.900 2.600 1.500 2.200-1 3.900 1.600V8.800z"/><circle cx="9.600" cy="3.300" r="1.600"/></svg><div class="btn" style="left:1525px;top:235px;width:40px;height:28px;"></div><svg class="ic" style="left:1538px;top:243.5px;color:#222;" width="13.5" height="9" viewBox="0 0 16 9" fill="#222"><rect x="0" width="1.600" height="9"/><rect x="2.400" width=".8" height="9"/><rect x="4" width="1.600" height="9"/><rect x="6.400" width="1.400" height="9"/><rect x="8.600" width=".8" height="9"/><rect x="10.200" width="1.600" height="9"/><rect x="12.600" width=".8" height="9"/><rect x="14.200" width="1.800" height="9"/></svg><div class="btn" style="left:1595px;top:235px;width:40px;height:28px;"></div><svg class="ic" style="left:1609px;top:241.5px;color:#222;" width="11" height="14" viewBox="0 0 12 15" fill="#222"><path d="M0 1.500h3.200V0h5.600v1.500H12V15H0z M1.400 4.200v9.400h9.200V4.200z M4.400 1.200v1.600h3.200V1.200z" fill-rule="evenodd"/><rect x="3" y="6" width="6" height="1.300"/><rect x="3" y="8.400" width="6" height="1.300"/><rect x="3" y="10.800" width="4" height="1.300"/></svg><div style="left:1623.5px;top:0px;width:10px;height:26px;background:#fafafa;border:1px solid #d4d4d4"></div><svg class="ic" style="left:1627px;top:9px;color:#222;" width="8" height="8" viewBox="0 0 16 13" fill="#222"><rect width="16" height="3.100" y="0"/><rect width="16" height="3.100" y="4.950"/><rect width="16" height="3.100" y="9.900"/></svg></div>
</div>
<div id="curtain"></div>
<div id="modal"><span class="t" style="left:12.300000000000011px;top:19.599999999999994px;font-size:16px;color:#8a8a8a;letter-spacing:-0.04px;">Edytuj dostawę</span><svg class="ic" style="left:1147.5px;top:13.300000000000011px;color:#8c8c8c" width="10" height="10" viewBox="0 0 12 12" fill="none"><path d="M6 0.500V11.500M0.500 6H11.500" stroke="currentColor" stroke-width="1.100" fill="none"/></svg><svg class="ic" style="left:1177px;top:13.5px;color:#8c8c8c" width="9" height="9" viewBox="0 0 12 12" fill="none"><path d="M1 1 11 11M11 1 1 11" stroke="currentColor" stroke-width="1.100" fill="none"/></svg><div class="btn" style="left:12px;top:48px;width:105px;height:37px;"></div><svg class="ic" style="left:28.80000000000001px;top:57.80000000000001px;color:#111;" width="16" height="16" viewBox="0 0 16 16" fill="#111"><path d="M1.800 1.800 14.200 14.200M14.200 1.800 1.800 14.200" stroke="currentColor" stroke-width="3.400" fill="none" stroke-linecap="butt"/></svg><span class="t" style="left:52px;top:67.19999999999999px;font-size:16.9px;color:#191919;letter-spacing:0.11px;">Anuluj</span><div class="btn" style="left:129px;top:48px;width:85px;height:37px;"></div><span class="t" style="left:146px;top:67.19999999999999px;font-size:17.4px;color:#191919;letter-spacing:0.30px;">Import</span><span class="t" style="left:226.20000000000005px;top:67.30000000000001px;font-size:15.6px;color:#5a5a7a;text-decoration:underline;text-decoration-thickness:1px;text-underline-offset:2px;letter-spacing:-0.11px;">Szablon</span><div class="btn" style="left:1131px;top:48px;width:56px;height:37px;background:linear-gradient(#2fa023 2%,#27881c 98%);border-color:#1f7d17;box-shadow:inset 0 1px 0 #4cb53f,inset 0 -1px 0 #227a18,0 2px 3px rgba(0,0,0,.05)"></div><span class="t" style="left:1148.3px;top:67.19999999999999px;font-size:15.62px;color:#e4f6df;letter-spacing:-0.55px;">OK</span><div style="left:12px;top:125px;width:1176px;height:1px;background:#dfdfdf"></div><span class="t" style="left:16px;top:111.9px;font-size:15.3px;color:#6b6b88;letter-spacing:-0.22px;">Wspólne</span><span class="t" style="left:101.80000000000001px;top:111.9px;font-size:15px;color:#8c8c8c;letter-spacing:-0.18px;">Dostawca</span><div style="left:12px;top:124px;width:67px;height:2px;background:#2d2d55"></div><span class="t" style="left:25.19999999999999px;top:148.8px;font-size:14.7px;color:#464646;letter-spacing:0.28px;">Numer</span><div class="in" style="left:24px;top:164px;width:267px;height:28px;"><span class="t" style="left:8px;top:12.8px;font-size:12.3px;color:#474747;letter-spacing:0.01px;">DOST/002/9/2022</span></div><div class="btn" style="left:303px;top:161px;width:96px;height:31px;"></div><svg class="ic" style="left:311.5px;top:170.5px;color:#191919" width="15" height="14" viewBox="0 0 16 15" fill="#191919"><path d="M5.500 1.500a4.500 4.500 0 1 0 .01 0z M5.500 4a2 2 0 1 1-.01 0z" fill-rule="evenodd"/><path d="M4.700 0h1.600v2.200H4.700z M4.700 9.800h1.600V12H4.700z M0 5.200h2.200v1.600H0z M8.800 5.200H11v1.600H8.800z M1 2.100 2.100 1 3.700 2.600 2.600 3.700z M7.300 8.400 8.400 7.300 10 8.900 8.900 10z M1 9.900 2.600 8.300 3.700 9.400 2.100 11z M7.300 3.600 8.900 2 10 3.100 8.400 4.700z"/><circle cx="13" cy="3" r="1.900" fill="none" stroke="currentColor" stroke-width="1.400"/><circle cx="13" cy="12" r="1.900" fill="none" stroke="currentColor" stroke-width="1.400"/></svg><span class="t" style="left:330.4px;top:178.3px;font-size:14.4px;color:#191919;letter-spacing:-0.20px;">Licznik</span><svg class="ic" style="left:379px;top:175.5px;color:#6f6f6f" width="9" height="6" viewBox="0 0 12 8" fill="none"><path d="M1.200 1.200 6 6 10.800 1.200" fill="none" stroke="currentColor" stroke-width="2.500"/></svg><span class="t" style="left:413.5px;top:148.8px;font-size:14.7px;color:#464646;letter-spacing:0.20px;">Kontrahent</span><div class="dis" style="left:412px;top:164px;width:324px;height:28px;"><span class="t" style="left:8px;top:12.8px;font-size:11.52px;color:#474747;letter-spacing:-0.36px;">BITNER</span></div><div class="btn" style="left:748px;top:164px;width:40px;height:28px;"></div><svg class="ic" style="left:761.5px;top:170.5px;color:#111;" width="13" height="13" viewBox="0 0 14 14" fill="#111"><rect x="1" y="0" width="12" height="2.400"/><rect x="0" y="3.800" width="10" height="2.400"/><rect x="1" y="7.600" width="13" height="2.400"/><rect x="0" y="11.400" width="12" height="2.400"/></svg><span class="t" style="left:801.2px;top:148.8px;font-size:14.7px;color:#464646;letter-spacing:-0.01px;">Zamówienie</span><div class="dis" style="left:800px;top:164px;width:324px;height:28px;"><span class="t" style="left:8px;top:12.8px;font-size:12.3px;color:#474747;letter-spacing:0.07px;">ZD 02/05/2022</span></div><div class="btn" style="left:1136px;top:164px;width:40px;height:28px;"></div><svg class="ic" style="left:1149.5px;top:170.5px;color:#111;" width="13" height="13" viewBox="0 0 14 14" fill="#111"><rect x="1" y="0" width="12" height="2.400"/><rect x="0" y="3.800" width="10" height="2.400"/><rect x="1" y="7.600" width="13" height="2.400"/><rect x="0" y="11.400" width="12" height="2.400"/></svg><span class="t" style="left:25.19999999999999px;top:215.2px;font-size:14.7px;color:#464646;letter-spacing:-0.03px;">Data dostawy</span><div class="in" style="left:24px;top:230px;width:185px;height:28px;"><div style="left:28px;top:0px;width:1px;height:26px;background:#dcdcdc"></div><span class="t" style="left:34px;top:12.8px;font-size:12.3px;color:#474747;letter-spacing:0.01px;">2022-08-26</span></div><svg class="ic" style="left:32.5px;top:237.5px;color:#b9b4b4" width="12" height="12" viewBox="0 0 14 14" fill="#b9b4b4"><path d="M0 1.500h14V14H0z M1 4.500V13h12V4.500z" fill-rule="evenodd"/><rect x="2.800" y="0" width="1.600" height="3"/><rect x="9.600" y="0" width="1.600" height="3"/><path d="M4.200 4.500v8.500M7 4.500v8.500M9.800 4.500v8.500M1 7.300h12M1 10.100h12" stroke="currentColor" stroke-width=".7" fill="none"/></svg><span class="t" style="left:222.10000000000002px;top:215.2px;font-size:14.7px;color:#464646;letter-spacing:-0.07px;">Waluta</span><div class="in" style="left:221px;top:230px;width:185px;height:28px;"><div style="left:155px;top:0px;width:1px;height:26px;background:#e0e0e0"></div><span class="t" style="left:6px;top:12.8px;font-size:12.3px;color:#474747;letter-spacing:-0.06px;">PLN - polski Złoty</span></div><svg class="ic" style="left:386px;top:242px;color:#6f6f6f" width="10.5" height="7" viewBox="0 0 12 8" fill="none"><path d="M1.200 1.200 6 6 10.800 1.200" fill="none" stroke="currentColor" stroke-width="2.500"/></svg><span class="t" style="left:419.6px;top:215.2px;font-size:14.7px;color:#464646;letter-spacing:-0.04px;">Kurs waluty</span><div class="in" style="left:418px;top:230px;width:150px;height:28px;"><span class="t" style="left:8px;top:12.8px;font-size:12.3px;color:#474747;letter-spacing:-0.08px;">0,0000</span></div><span class="t" style="left:581.6px;top:215.2px;font-size:14.7px;color:#464646;letter-spacing:-0.32px;">Lokalizacja</span><div class="dis" style="left:580px;top:230px;width:544px;height:28px;"></div><div class="btn" style="left:1136px;top:230px;width:40px;height:28px;"></div><svg class="ic" style="left:1149.5px;top:236.5px;color:#111;" width="13" height="13" viewBox="0 0 14 14" fill="#111"><rect x="1" y="0" width="12" height="2.400"/><rect x="0" y="3.800" width="10" height="2.400"/><rect x="1" y="7.600" width="13" height="2.400"/><rect x="0" y="11.400" width="12" height="2.400"/></svg><span class="t" style="left:25.19999999999999px;top:281.3px;font-size:14.7px;color:#464646;letter-spacing:-0.19px;">Zlecenie pracy</span><div class="dis" style="left:24px;top:296px;width:387px;height:28px;"></div><div class="btn" style="left:423px;top:296px;width:72px;height:28px;"></div><span class="t" style="left:436.6px;top:309.6px;font-size:12.4px;color:#191919;letter-spacing:-0.06px;">Wybierz</span><span class="t" style="left:509px;top:281.3px;font-size:14.39px;color:#464646;letter-spacing:-0.14px;">Magazyn</span><div class="dis" style="left:508px;top:296px;width:386px;height:28px;"></div><div class="btn" style="left:906px;top:296px;width:72px;height:28px;"></div><span class="t" style="left:919.5999999999999px;top:309.6px;font-size:12.4px;color:#191919;letter-spacing:-0.06px;">Wybierz</span><span class="t" style="left:992.5px;top:281.3px;font-size:14.7px;color:#464646;letter-spacing:-0.27px;">Miejsce</span><div class="in" style="left:991px;top:296px;width:185px;height:28px;"><div style="left:155px;top:0px;width:1px;height:26px;background:#e0e0e0"></div></div><svg class="ic" style="left:1156px;top:308px;color:#6f6f6f" width="10.5" height="7" viewBox="0 0 12 8" fill="none"><path d="M1.200 1.200 6 6 10.800 1.200" fill="none" stroke="currentColor" stroke-width="2.500"/></svg><span class="t" style="left:25.19999999999999px;top:363.1px;font-size:15.3px;color:#6b6b88;letter-spacing:-0.30px;">Elementy</span><span class="t" style="left:114.5px;top:363.1px;font-size:14.81px;color:#8c8c8c;letter-spacing:-0.18px;">Pakiety</span><div style="left:21px;top:375px;width:70px;height:2px;background:#2d2d55"></div><div style="left:12px;top:376.5px;width:1176px;height:64px;background:#f0e68c"></div><span class="t" style="left:69.60000000000002px;top:392.70000000000005px;font-size:14.33px;color:#464646;letter-spacing:-0.19px;">Typ</span><span class="t" style="left:778.8px;top:392.70000000000005px;font-size:14.7px;color:#464646;letter-spacing:-0.25px;">Ilość</span><span class="t" style="left:869.8px;top:392.70000000000005px;font-size:14.31px;color:#464646;letter-spacing:-0.15px;">Jednostka</span><span class="t" style="left:982.3px;top:392.70000000000005px;font-size:13.98px;color:#464646;letter-spacing:-0.37px;">Cena</span><div class="btn" style="left:18px;top:408px;width:39px;height:28px;"></div><svg class="ic" style="left:30.69999999999999px;top:414.70000000000005px;color:#111;" width="12.6" height="12.6" viewBox="0 0 16 16" fill="#111"><path d="M8 0a8 8 0 1 0 .01 0z M6.800 3.400h2.400v3.400h3.400v2.400H9.200v3.400H6.800V9.200H3.400V6.800h3.400z" fill-rule="evenodd"/></svg><div class="in" style="left:69px;top:408px;width:695px;height:28px;"><div style="left:667px;top:0px;width:1px;height:26px;background:#e0e0e0"></div><span class="t" style="left:6px;top:12.8px;font-size:12.3px;color:#474747;letter-spacing:-0.05px;">Bęben Bitner S5 (50cm) (1621.03-1101)</span></div><svg class="ic" style="left:745px;top:420px;color:#6f6f6f" width="10.5" height="7" viewBox="0 0 12 8" fill="none"><path d="M1.200 1.200 6 6 10.800 1.200" fill="none" stroke="currentColor" stroke-width="2.500"/></svg><div class="in" style="left:777px;top:408px;width:80px;height:28px;"><span class="t" style="left:8px;top:12.8px;font-size:11.76px;color:#474747;letter-spacing:-0.39px;">10</span></div><div class="btn" style="left:869px;top:408px;width:100px;height:28px;"><span class="t" style="left:6px;top:12.8px;font-size:12.3px;color:#474747;letter-spacing:-0.26px;">szt</span></div><svg class="ic" style="left:949px;top:420px;color:#6f6f6f" width="10.5" height="7" viewBox="0 0 12 8" fill="none"><path d="M1.200 1.200 6 6 10.800 1.200" fill="none" stroke="currentColor" stroke-width="2.500"/></svg><div class="in" style="left:981px;top:408px;width:150px;height:28px;"></div><div class="btn" style="left:1143px;top:408px;width:40px;height:28px;background:linear-gradient(#2fa023 2%,#27881c 98%);border-color:#1f7d17;box-shadow:inset 0 1px 0 #4cb53f,inset 0 -1px 0 #227a18,0 2px 3px rgba(0,0,0,.05)"></div><svg class="ic" style="left:1158.3px;top:416px;color:#e4f6df;" width="9.5" height="9.5" viewBox="0 0 12 12" fill="#e4f6df"><path d="M5.200 0h1.600v5.200H12v1.600H6.800V12H5.200V6.800H0V5.200h5.200z"/></svg><div style="left:12px;top:453px;width:1176px;height:223px;border:1px solid #d4d4d4;overflow:hidden;background:#fff"><div style="left:-1px;top:0px;width:1176px;height:230px;"><div style="left:0px;top:0px;width:1176px;height:38px;background:linear-gradient(#fafafa,#efefef);border-bottom:1px solid #d4d4d4"></div><div style="left:0px;top:38px;width:1176px;height:38px;background:#fff;border-bottom:1px solid #d4d4d4"></div><div style="left:0px;top:76px;width:1176px;height:38px;background:#f5f5f5;border-bottom:1px solid #d4d4d4"></div><div style="left:0px;top:114px;width:1176px;height:38px;background:#fff;border-bottom:1px solid #d4d4d4"></div><div style="left:0px;top:152px;width:1176px;height:38px;background:#f5f5f5;border-bottom:1px solid #d4d4d4"></div><div style="left:0px;top:190px;width:1176px;height:38px;background:#fff;border-bottom:1px solid #d4d4d4"></div><div style="left:301px;top:0px;width:1px;height:223px;background:#d4d4d4"></div><div style="left:450px;top:0px;width:1px;height:223px;background:#d4d4d4"></div><div style="left:553px;top:0px;width:1px;height:223px;background:#d4d4d4"></div><div style="left:663px;top:0px;width:1px;height:223px;background:#d4d4d4"></div><div style="left:736px;top:0px;width:1px;height:223px;background:#d4d4d4"></div><div style="left:835px;top:0px;width:1px;height:223px;background:#d4d4d4"></div><div style="left:913px;top:0px;width:1px;height:223px;background:#d4d4d4"></div><div style="left:1032px;top:0px;width:1px;height:223px;background:#d4d4d4"></div><div style="left:1112px;top:0px;width:1px;height:223px;background:#d4d4d4"></div><span class="t" style="left:19px;top:18px;font-size:13.83px;color:#6b6b6b;letter-spacing:-0.44px;">Typ</span><span class="t" style="left:320px;top:18px;font-size:14.7px;color:#6b6b6b;letter-spacing:-0.34px;">Nr zamówieniowy</span><span class="t" style="left:469px;top:18px;font-size:14.7px;color:#6b6b6b;letter-spacing:-0.26px;">Producent</span><span class="t" style="left:572px;top:18px;font-size:13.90px;color:#6b6b6b;letter-spacing:-0.26px;">Ilość</span><span class="t" style="left:682px;top:18px;font-size:13.86px;color:#6b6b6b;letter-spacing:-0.46px;">Waga</span><span class="t" style="left:755px;top:18px;font-size:13.82px;color:#6b6b6b;letter-spacing:-0.32px;">Jednostka</span><span class="t" style="left:854px;top:18px;font-size:13.69px;color:#6b6b6b;letter-spacing:-0.50px;">Cena</span><span class="t" style="left:932px;top:18px;font-size:14.35px;color:#6b6b6b;letter-spacing:-0.14px;">Wartość</span><span class="t" style="left:19px;top:57px;font-size:15.4px;color:#646464;letter-spacing:-0.08px;">BiT RE-2X(St)Hv 1x2x1,0mm² 500V</span><span class="t" style="left:320px;top:57px;font-size:15.4px;color:#646464;letter-spacing:0.32px;">1621.03-1201</span><span class="t" style="left:469px;top:57px;font-size:14.59px;color:#646464;letter-spacing:-0.38px;">BITNER</span><span class="t" style="left:572px;top:57px;font-size:15.4px;color:#646464;letter-spacing:0.31px;">43 373,00</span><span class="t" style="left:682px;top:57px;font-size:15.4px;color:#646464;letter-spacing:0.21px;">0.00</span><span class="t" style="left:755px;top:57px;font-size:15.4px;color:#646464;">m</span><span class="t" style="left:854px;top:57px;font-size:15.4px;color:#646464;letter-spacing:-0.12px;">3,47</span><span class="t" style="left:932px;top:57px;font-size:15.4px;color:#646464;letter-spacing:0.19px;">150 504,31</span><div class="btn" style="left:1051px;top:46px;width:40px;height:28px;"></div><svg class="ic" style="left:1064px;top:52.5px;color:#111;" width="14" height="14" viewBox="0 0 16 16" fill="#111"><g transform="rotate(-45 8 8)" fill="none" stroke="currentColor" stroke-width="2.100"><rect x="-0.800" y="5.100" width="9.600" height="5.800" rx="2.900"/><rect x="7.200" y="5.100" width="9.600" height="5.800" rx="2.900"/></g></svg><div class="btn" style="left:1131px;top:46px;width:40px;height:28px;"></div><svg class="ic" style="left:1145.5px;top:53.5px;color:#111;" width="10" height="11.5" viewBox="0 0 14 16" fill="#111"><path d="M4.600 2.200V.900a.9.900 0 0 1 .9-.9h3a.9.900 0 0 1 .9.900V2.200h-1.200V1.200H5.800V2.200z"/><path d="M.400 2.200h13.200V4H.400z"/><path d="M1.500 4.800h11l-.9 10.200a1 1 0 0 1-1 1H3.400a1 1 0 0 1-1-1z M4.300 6.400v7.600h1.300V6.400z M6.350 6.400v7.600h1.300V6.400z M8.400 6.400v7.600h1.300V6.400z" fill-rule="evenodd"/></svg><span class="t" style="left:19px;top:95px;font-size:15.4px;color:#646464;letter-spacing:-0.08px;">BiT RE-2X(St)Hv 8x3x1,0mm² 500V</span><span class="t" style="left:320px;top:95px;font-size:15.4px;color:#646464;letter-spacing:0.32px;">1621.03-1203</span><span class="t" style="left:469px;top:95px;font-size:14.59px;color:#646464;letter-spacing:-0.38px;">BITNER</span><span class="t" style="left:572px;top:95px;font-size:15.4px;color:#646464;letter-spacing:0.37px;">1 095,00</span><span class="t" style="left:682px;top:95px;font-size:15.4px;color:#646464;letter-spacing:0.21px;">0.00</span><span class="t" style="left:755px;top:95px;font-size:15.4px;color:#646464;">m</span><span class="t" style="left:854px;top:95px;font-size:15.4px;color:#646464;letter-spacing:-0.15px;">28,81</span><span class="t" style="left:932px;top:95px;font-size:15.4px;color:#646464;letter-spacing:0.24px;">31 546,95</span><div class="btn" style="left:1051px;top:84px;width:40px;height:28px;"></div><svg class="ic" style="left:1064px;top:90.5px;color:#111;" width="14" height="14" viewBox="0 0 16 16" fill="#111"><g transform="rotate(-45 8 8)" fill="none" stroke="currentColor" stroke-width="2.100"><rect x="-0.800" y="5.100" width="9.600" height="5.800" rx="2.900"/><rect x="7.200" y="5.100" width="9.600" height="5.800" rx="2.900"/></g></svg><div class="btn" style="left:1131px;top:84px;width:40px;height:28px;"></div><svg class="ic" style="left:1145.5px;top:91.5px;color:#111;" width="10" height="11.5" viewBox="0 0 14 16" fill="#111"><path d="M4.600 2.200V.900a.9.900 0 0 1 .9-.9h3a.9.900 0 0 1 .9.900V2.200h-1.200V1.200H5.800V2.200z"/><path d="M.400 2.200h13.200V4H.400z"/><path d="M1.500 4.800h11l-.9 10.200a1 1 0 0 1-1 1H3.400a1 1 0 0 1-1-1z M4.300 6.400v7.600h1.300V6.400z M6.350 6.400v7.600h1.300V6.400z M8.400 6.400v7.600h1.300V6.400z" fill-rule="evenodd"/></svg><span class="t" style="left:19px;top:133px;font-size:15.4px;color:#646464;letter-spacing:-0.08px;">BiT RE-2X(St)Hv 4x3x1,0mm² 500V</span><span class="t" style="left:320px;top:133px;font-size:15.4px;color:#646464;letter-spacing:0.32px;">1621.03-1202</span><span class="t" style="left:469px;top:133px;font-size:14.59px;color:#646464;letter-spacing:-0.38px;">BITNER</span><span class="t" style="left:572px;top:133px;font-size:15.4px;color:#646464;letter-spacing:0.37px;">1 679,00</span><span class="t" style="left:682px;top:133px;font-size:15.4px;color:#646464;letter-spacing:0.21px;">0.00</span><span class="t" style="left:755px;top:133px;font-size:15.4px;color:#646464;">m</span><span class="t" style="left:854px;top:133px;font-size:15.4px;color:#646464;">15,42</span><span class="t" style="left:932px;top:133px;font-size:15.4px;color:#646464;letter-spacing:0.24px;">25 890,18</span><div class="btn" style="left:1051px;top:122px;width:40px;height:28px;"></div><svg class="ic" style="left:1064px;top:128.5px;color:#111;" width="14" height="14" viewBox="0 0 16 16" fill="#111"><g transform="rotate(-45 8 8)" fill="none" stroke="currentColor" stroke-width="2.100"><rect x="-0.800" y="5.100" width="9.600" height="5.800" rx="2.900"/><rect x="7.200" y="5.100" width="9.600" height="5.800" rx="2.900"/></g></svg><div class="btn" style="left:1131px;top:122px;width:40px;height:28px;"></div><svg class="ic" style="left:1145.5px;top:129.5px;color:#111;" width="10" height="11.5" viewBox="0 0 14 16" fill="#111"><path d="M4.600 2.200V.900a.9.900 0 0 1 .9-.9h3a.9.900 0 0 1 .9.900V2.200h-1.200V1.200H5.800V2.200z"/><path d="M.400 2.200h13.200V4H.400z"/><path d="M1.500 4.800h11l-.9 10.200a1 1 0 0 1-1 1H3.400a1 1 0 0 1-1-1z M4.300 6.400v7.600h1.300V6.400z M6.350 6.400v7.600h1.300V6.400z M8.400 6.400v7.600h1.300V6.400z" fill-rule="evenodd"/></svg><span class="t" style="left:19px;top:171px;font-size:15.4px;color:#646464;letter-spacing:0.27px;">BiT 1000® H 4x2x1,5 mm² 0,6/1 kV</span><span class="t" style="left:320px;top:171px;font-size:15.4px;color:#646464;letter-spacing:0.32px;">1621.03-1029</span><span class="t" style="left:469px;top:171px;font-size:14.59px;color:#646464;letter-spacing:-0.38px;">BITNER</span><span class="t" style="left:572px;top:171px;font-size:15.4px;color:#646464;letter-spacing:0.37px;">1 000,00</span><span class="t" style="left:682px;top:171px;font-size:15.4px;color:#646464;letter-spacing:0.21px;">0.00</span><span class="t" style="left:755px;top:171px;font-size:15.4px;color:#646464;">m</span><span class="t" style="left:854px;top:171px;font-size:15.4px;color:#646464;">17,40</span><span class="t" style="left:932px;top:171px;font-size:15.4px;color:#646464;letter-spacing:0.24px;">17 400,00</span><div class="btn" style="left:1051px;top:160px;width:40px;height:28px;"></div><svg class="ic" style="left:1064px;top:166.5px;color:#111;" width="14" height="14" viewBox="0 0 16 16" fill="#111"><g transform="rotate(-45 8 8)" fill="none" stroke="currentColor" stroke-width="2.100"><rect x="-0.800" y="5.100" width="9.600" height="5.800" rx="2.900"/><rect x="7.200" y="5.100" width="9.600" height="5.800" rx="2.900"/></g></svg><div class="btn" style="left:1131px;top:160px;width:40px;height:28px;"></div><svg class="ic" style="left:1145.5px;top:167.5px;color:#111;" width="10" height="11.5" viewBox="0 0 14 16" fill="#111"><path d="M4.600 2.200V.900a.9.900 0 0 1 .9-.9h3a.9.900 0 0 1 .9.900V2.200h-1.200V1.200H5.800V2.200z"/><path d="M.400 2.200h13.200V4H.400z"/><path d="M1.500 4.800h11l-.9 10.200a1 1 0 0 1-1 1H3.400a1 1 0 0 1-1-1z M4.300 6.400v7.600h1.300V6.400z M6.350 6.400v7.600h1.300V6.400z M8.400 6.400v7.600h1.300V6.400z" fill-rule="evenodd"/></svg><span class="t" style="left:19px;top:209px;font-size:15.4px;color:#646464;letter-spacing:-0.11px;">BiTLAN F/UTP 4x2x23 AWG (0,54) c...</span><span class="t" style="left:320px;top:209px;font-size:15.4px;color:#646464;letter-spacing:0.42px;">1621.03-1101</span><span class="t" style="left:469px;top:209px;font-size:14.59px;color:#646464;letter-spacing:-0.38px;">BITNER</span><span class="t" style="left:572px;top:209px;font-size:15.4px;color:#646464;letter-spacing:0.31px;">26 200,00</span><span class="t" style="left:682px;top:209px;font-size:15.4px;color:#646464;letter-spacing:0.21px;">0.00</span><span class="t" style="left:755px;top:209px;font-size:15.4px;color:#646464;">m</span><span class="t" style="left:854px;top:209px;font-size:15.4px;color:#646464;letter-spacing:-0.12px;">2,32</span><span class="t" style="left:932px;top:209px;font-size:15.4px;color:#646464;letter-spacing:0.24px;">60 784,00</span><div class="btn" style="left:1051px;top:198px;width:40px;height:28px;"></div><svg class="ic" style="left:1064px;top:204.5px;color:#111;" width="14" height="14" viewBox="0 0 16 16" fill="#111"><g transform="rotate(-45 8 8)" fill="none" stroke="currentColor" stroke-width="2.100"><rect x="-0.800" y="5.100" width="9.600" height="5.800" rx="2.900"/><rect x="7.200" y="5.100" width="9.600" height="5.800" rx="2.900"/></g></svg><div class="btn" style="left:1131px;top:198px;width:40px;height:28px;"></div><svg class="ic" style="left:1145.5px;top:205.5px;color:#111;" width="10" height="11.5" viewBox="0 0 14 16" fill="#111"><path d="M4.600 2.200V.900a.9.900 0 0 1 .9-.9h3a.9.900 0 0 1 .9.900V2.200h-1.200V1.200H5.800V2.200z"/><path d="M.400 2.200h13.200V4H.400z"/><path d="M1.500 4.800h11l-.9 10.200a1 1 0 0 1-1 1H3.400a1 1 0 0 1-1-1z M4.300 6.400v7.600h1.300V6.400z M6.350 6.400v7.600h1.300V6.400z M8.400 6.400v7.600h1.300V6.400z" fill-rule="evenodd"/></svg></div></div><span class="t" style="left:13.399999999999977px;top:699.3px;font-size:14.35px;color:#464646;letter-spacing:-0.16px;">Opis</span><div class="in" style="left:12px;top:714px;width:1176px;height:74px;"></div><span class="t" style="left:490.5px;top:713.6px;font-size:21.2px;color:#f01414;letter-spacing:0.20px;">usuwamy typ ogólny "Bęben bitner"</span></div>
<svg class="co" style="left:0;top:0" width="1885" height="1031" viewBox="0 0 1885 1031"><polygon points="234.0,771.8 194.9,744.5 242.6,745.9 250.8,763" fill="#ff0000"/><circle cx="250.8" cy="763" r="20" fill="#fff" fill-opacity=".9"/><circle cx="250.8" cy="763" r="19.100" fill="#111"/><circle cx="250.8" cy="763" r="18" fill="#fff" fill-opacity=".85"/><circle cx="250.8" cy="763" r="17.500" fill="#ff0000"/><text x="250.5" y="769.8" text-anchor="middle" font-family="Liberation Sans, sans-serif" font-weight="bold" font-size="17.600" fill="#fff">1</text><polygon points="1304.8,41.6 1369.1,32.3 1314.3,67.2 1297.2,59" fill="#ff0000"/><circle cx="1297.2" cy="59" r="20" fill="#fff" fill-opacity=".9"/><circle cx="1297.2" cy="59" r="19.100" fill="#111"/><circle cx="1297.2" cy="59" r="18" fill="#fff" fill-opacity=".85"/><circle cx="1297.2" cy="59" r="17.500" fill="#ff0000"/><text x="1296.9" y="65.8" text-anchor="middle" font-family="Liberation Sans, sans-serif" font-weight="bold" font-size="17.600" fill="#fff">2</text><polygon points="719.9,277.6 613.3,306.2 707.7,249.0 723.8,259" fill="#ff0000"/><circle cx="723.8" cy="259" r="20" fill="#fff" fill-opacity=".9"/><circle cx="723.8" cy="259" r="19.100" fill="#111"/><circle cx="723.8" cy="259" r="18" fill="#fff" fill-opacity=".85"/><circle cx="723.8" cy="259" r="17.500" fill="#ff0000"/><text x="723.5" y="265.8" text-anchor="middle" font-family="Liberation Sans, sans-serif" font-weight="bold" font-size="17.600" fill="#fff">3</text><polygon points="335.9,509.3 384.2,533.8 330.1,536.1 320.1,519.9" fill="#ff0000"/><circle cx="320.1" cy="519.9" r="20" fill="#fff" fill-opacity=".9"/><circle cx="320.1" cy="519.9" r="19.100" fill="#111"/><circle cx="320.1" cy="519.9" r="18" fill="#fff" fill-opacity=".85"/><circle cx="320.1" cy="519.9" r="17.500" fill="#ff0000"/><text x="319.8" y="526.6999999999999" text-anchor="middle" font-family="Liberation Sans, sans-serif" font-weight="bold" font-size="17.600" fill="#fff">4</text></svg>
</body></html>
